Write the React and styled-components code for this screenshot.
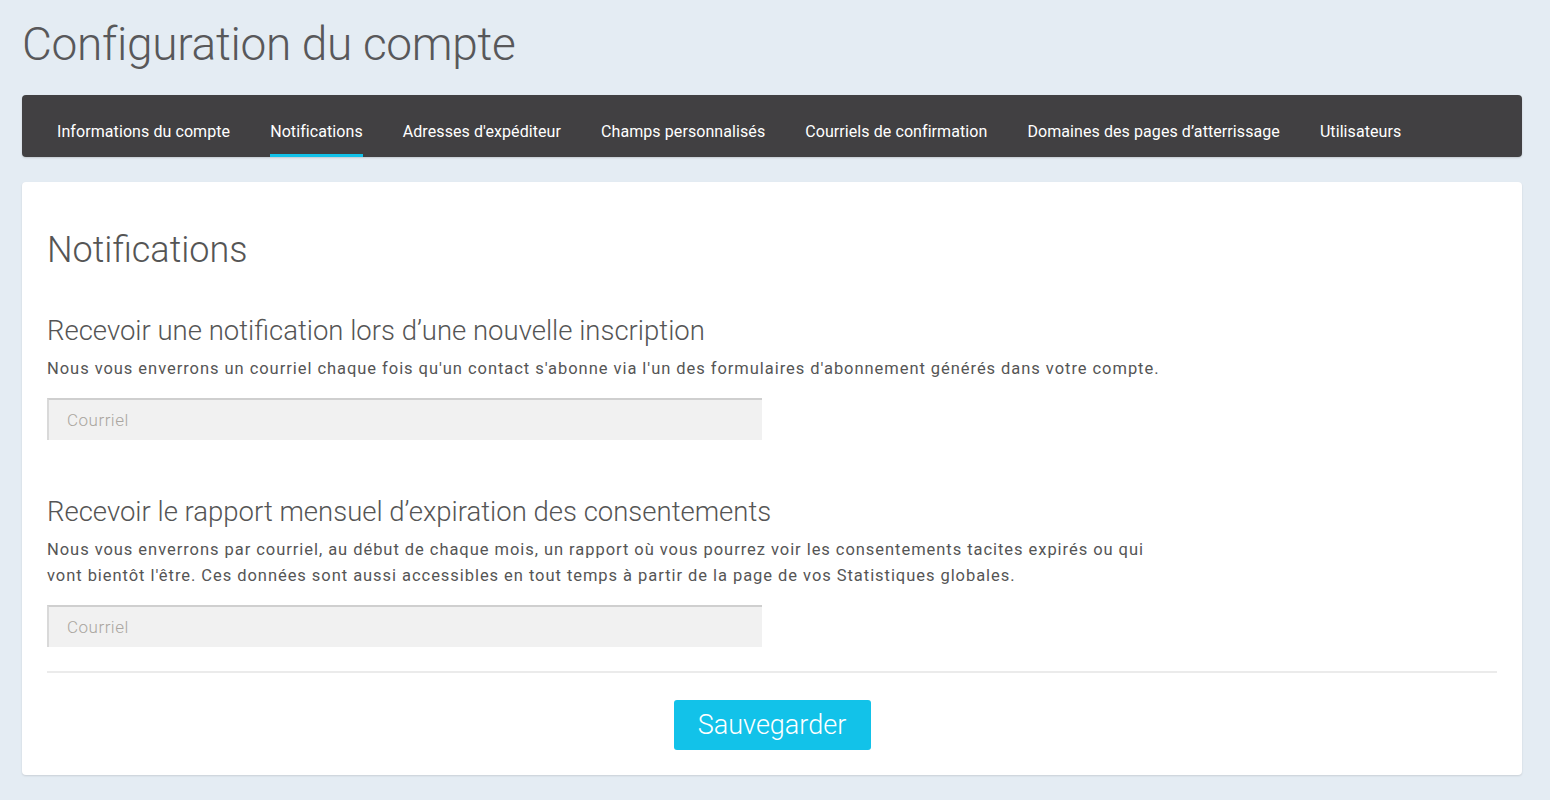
import React from "react";
import styled, { createGlobalStyle } from "styled-components";

const Global = createGlobalStyle`
  html, body { margin: 0; padding: 0; }
  body {
    background: #e4ecf3;
    font-family: Roboto, "Liberation Sans", sans-serif;
    color: #555;
  }
  * { box-sizing: border-box; }
`;

const Page = styled.div`
  padding: 0 28px 24px 22px;
`;

const PageTitle = styled.h1`
  margin: 0;
  padding-top: 15px;
  height: 95px;
  font-weight: 300;
  font-size: 46px;
  letter-spacing: -0.3px;
  line-height: 58px;
  color: #58585a;
`;

const TabBar = styled.nav`
  display: flex;
  align-items: stretch;
  height: 62px;
  padding: 0 15px;
  background: #414042;
  border-radius: 4px;
  box-shadow: 0 1px 2px rgba(0, 0, 0, 0.15);
`;

const Tab = styled.a`
  display: flex;
  align-items: center;
  height: 100%;
  margin: 0 20px;
  padding-top: 14px;
  font-size: 16px;
  letter-spacing: 0.08px;
  color: #fff;
  text-decoration: none;
  border-bottom: 3px solid ${(p) => (p.$active ? "#12c2e9" : "transparent")};
  cursor: pointer;
`;

const Card = styled.section`
  margin-top: 25px;
  background: #fff;
  border-radius: 4px;
  box-shadow: 0 1px 2px rgba(0, 0, 0, 0.12);
  padding: 0 25px 25px 25px;
`;

const CardTitle = styled.h2`
  margin: 0;
  padding-top: 46px;
  font-weight: 300;
  font-size: 36px;
  line-height: 44px;
  color: #555;
`;

const Section = styled.div`
  margin-top: ${(p) => p.$top}px;
`;

const SectionTitle = styled.h3`
  margin: 0;
  font-weight: 300;
  font-size: 27.5px;
  line-height: 36px;
  color: #555;
`;

const Desc = styled.p`
  margin: 7px 0 0;
  max-width: 1118px;
  font-size: 16.5px;
  line-height: 26px;
  letter-spacing: 0.95px;
  color: #555;
`;

const Input = styled.input`
  display: block;
  margin-top: 16px;
  width: 715px;
  height: 42px;
  padding: 0 18px;
  background: #f1f1f1;
  border: none;
  border-top: 2px solid #cfcfcf;
  border-left: 2px solid #d9d9d9;
  font-family: Roboto, "Liberation Sans", sans-serif;
  font-size: 17px;
  font-weight: 300;
  letter-spacing: 0.5px;
  color: #555;
  outline: none;
  &::placeholder { color: #aaa6a0; }
`;

const Divider = styled.hr`
  margin: 24px 0 0;
  border: none;
  border-top: 2px solid #ebebeb;
`;

const Actions = styled.div`
  display: flex;
  justify-content: center;
  margin-top: 27px;
`;

const SaveButton = styled.button`
  width: 197px;
  height: 50px;
  border: none;
  border-radius: 3px;
  background: #12c2e9;
  color: #fff;
  font-family: Roboto, "Liberation Sans", sans-serif;
  font-weight: 300;
  font-size: 27px;
  cursor: pointer;
`;

const tabs = [
  "Informations du compte",
  "Notifications",
  "Adresses d'expéditeur",
  "Champs personnalisés",
  "Courriels de confirmation",
  "Domaines des pages d’atterrissage",
  "Utilisateurs",
];

export default function App() {
  return (
    <>
      <Global />
      <Page>
        <PageTitle>Configuration du compte</PageTitle>
        <TabBar>
          {tabs.map((t) => (
            <Tab key={t} $active={t === "Notifications"}>
              {t}
            </Tab>
          ))}
        </TabBar>
        <Card>
          <CardTitle>Notifications</CardTitle>
          <Section $top={41}>
            <SectionTitle>Recevoir une notification lors d’une nouvelle inscription</SectionTitle>
            <Desc>
              Nous vous enverrons un courriel chaque fois qu'un contact s'abonne via l'un des formulaires d'abonnement générés dans votre compte.
            </Desc>
            <Input placeholder="Courriel" />
          </Section>
          <Section $top={54}>
            <SectionTitle>Recevoir le rapport mensuel d’expiration des consentements</SectionTitle>
            <Desc>
              Nous vous enverrons par courriel, au début de chaque mois, un rapport où vous pourrez voir les consentements tacites expirés ou qui vont bientôt l'être. Ces données sont aussi accessibles en tout temps à partir de la page de vos Statistiques globales.
            </Desc>
            <Input placeholder="Courriel" />
          </Section>
          <Divider />
          <Actions>
            <SaveButton>Sauvegarder</SaveButton>
          </Actions>
        </Card>
      </Page>
    </>
  );
}
